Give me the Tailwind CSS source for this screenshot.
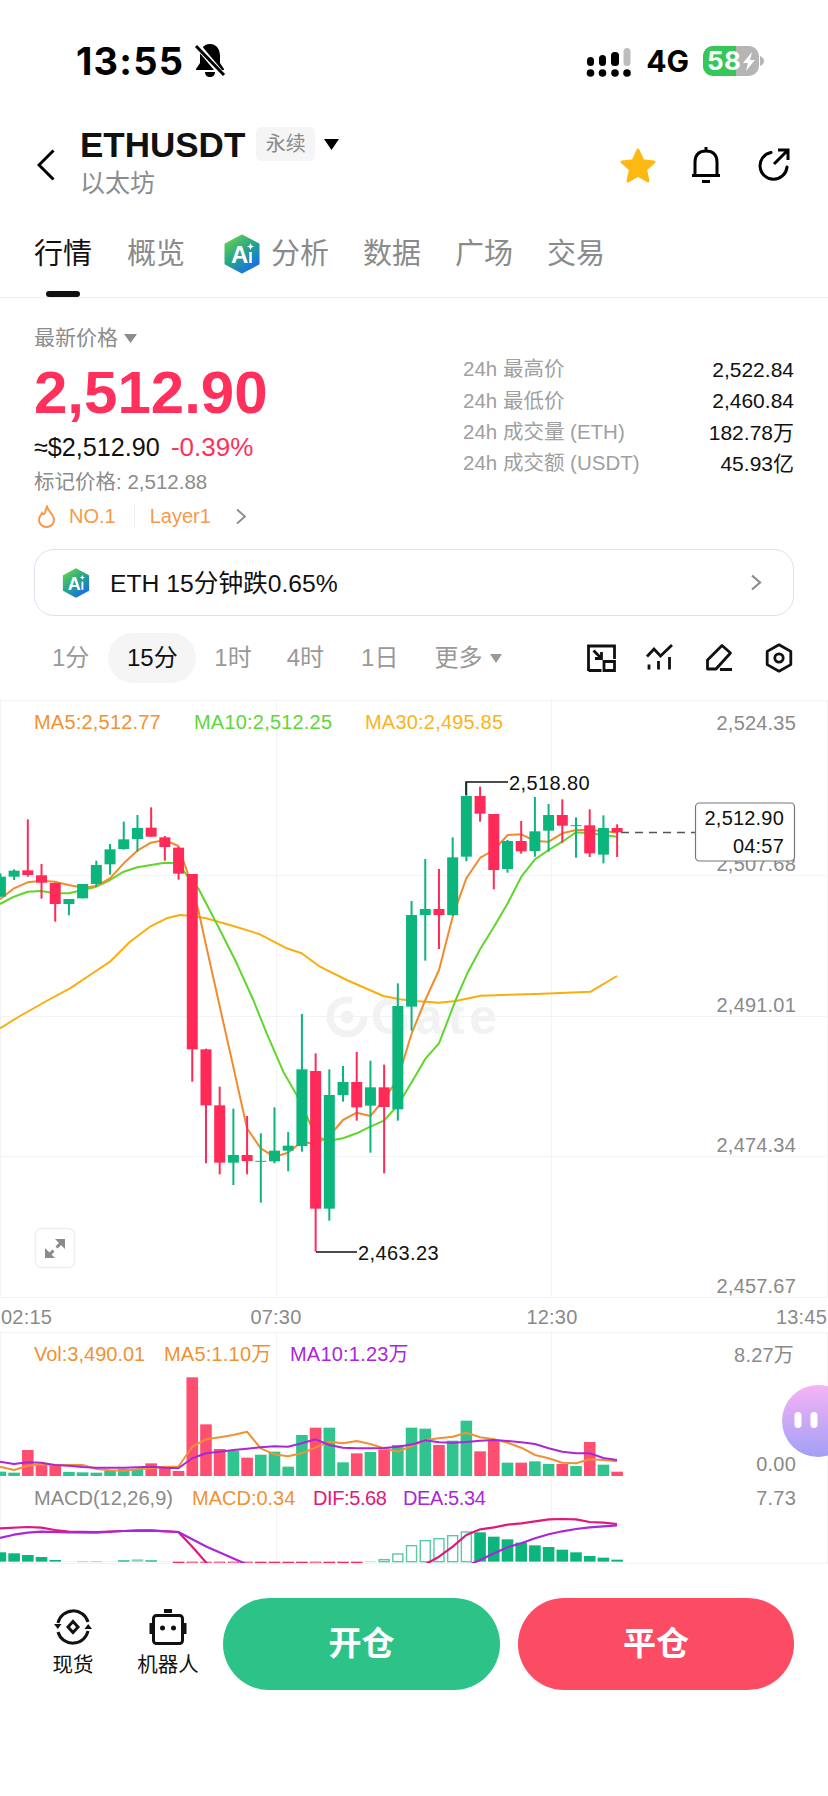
<!DOCTYPE html>
<html lang="zh">
<head>
<meta charset="utf-8">
<script src="https://cdn.jsdelivr.net/npm/@tailwindcss/browser@4"></script>
<title>ETHUSDT</title>
</head>
<body class="bg-white">
<div class="w-[828px] h-[1796px] overflow-hidden flex flex-col bg-white text-[#111] font-['Liberation_Sans','Noto_Sans_CJK_SC',sans-serif]">

  <!-- status bar -->
  <div class="h-[100px] pt-[41px] pl-[76px] pr-[63px] flex justify-between items-start shrink-0">
    <div class="flex items-center h-[40px] gap-[10px]">
      <span class="font-['Inter'] font-bold text-[38px] tracking-[1.200px] leading-none text-black">13:55</span>
      <svg width="32" height="34" viewBox="0 0 32 34" class="-mt-[2px]"><path d="M16 1c-7 0-10 6-10 12v7l-4 6v1h28v-1l-4-6v-7c0-6-3-12-10-12z" fill="#000"/><path d="M11 29h10c0 3-2 5-5 5s-5-2-5-5z" fill="#000"/><path d="M3 2 29 33" stroke="#fff" stroke-width="6"/><path d="M2 3 30 32" stroke="#000" stroke-width="3"/></svg>
    </div>
    <div class="flex items-center h-[40px]">
      <svg width="46" height="32" viewBox="0 0 46 32" class="mr-[15px] mt-[4px]">
        <g fill="#000"><rect x="2" y="10" width="7" height="9" rx="3.5"/><rect x="14" y="8" width="7" height="11" rx="3.5"/><rect x="26" y="5" width="8" height="14" rx="3.5"/><circle cx="5.500" cy="26" r="3.800"/><circle cx="17.500" cy="26" r="3.800"/><circle cx="30" cy="26" r="3.800"/><circle cx="42" cy="26" r="3.800"/></g>
        <rect x="38.500" y="1" width="7" height="18" rx="3.500" fill="#bdbdbd"/>
      </svg>
      <span class="font-['Inter'] font-bold text-[30px] leading-none text-black mr-[14px]">4G</span>
      <svg width="62" height="32" viewBox="0 0 62 32">
        <rect x="0" y="1" width="56" height="30" rx="10" fill="#b5b5b5"/>
        <path d="M10 1h23v30H10A10 10 0 0 1 0 21V11A10 10 0 0 1 10 1z" fill="#35c759"/>
        <path d="M57 11c3 1 4 3 4 5s-1 4-4 5z" fill="#b5b5b5"/>
        <text x="4" y="25" font-size="26" font-weight="700" letter-spacing=".5" fill="#fff" font-family="Inter">58</text>
        <path d="M49 7 40 18h5l-2 8 9-11h-5z" fill="#fff"/>
      </svg>
    </div>
  </div>

  <!-- header -->
  <div class="mt-[25px] h-[80px] pl-[37px] pr-[38px] flex items-center shrink-0">
    <svg width="18" height="32" viewBox="0 0 18 32" class="mr-[25px]"><path d="M16.500 1.500 2 16l14.500 14.500" fill="none" stroke="#000" stroke-width="3"/></svg>
    <div class="flex flex-col">
      <div class="flex items-center h-[38px]">
        <span class="font-bold text-[35px] leading-none text-[#111]">ETHUSDT</span>
        <span class="ml-[11px] w-[59px] h-[34px] rounded-[5px] bg-[#f5f5f5] text-[#8a8a8a] text-[20px] flex items-center justify-center">永续</span>
        <svg width="15" height="11" viewBox="0 0 15 11" class="ml-[9px]"><path d="M0 0h15L7.500 11z" fill="#000"/></svg>
      </div>
      <div class="h-[42px] flex items-center text-[25px] text-[#8c8c8c]">以太坊</div>
    </div>
    <div class="ml-auto flex items-center">
      <svg width="38" height="36" viewBox="0 0 38 36"><path d="M19 3l4.800 10.700 11.200 1.200-8.400 7.600 2.400 11.500L19 28.200 9 34l2.400-11.500L3 14.900l11.200-1.200z" fill="#fdb813" stroke="#fdb813" stroke-width="3" stroke-linejoin="round"/></svg>
      <svg width="32" height="38" viewBox="0 0 32 38" class="ml-[33px]"><path d="M5 28V16C5 9 9 5 16 5s11 4 11 11v12M2 29.500h28M16 1v4M12 35.500h8" fill="none" stroke="#000" stroke-width="3"/></svg>
      <svg width="33" height="34" viewBox="0 0 33 34" class="ml-[35px]"><path d="M14 4.500A13.500 13.500 0 1 0 30 19" fill="none" stroke="#000" stroke-width="3" stroke-linecap="round"/><path d="M17 16 30 3M21 2h10v10" fill="none" stroke="#000" stroke-width="3"/></svg>
    </div>
  </div>

  <!-- tabs -->
  <div class="h-[93px] border-b border-[#eeeeee] shrink-0">
    <div class="mt-[29px] h-[40px] pl-[34px] flex items-center text-[29px] text-[#8a8a8a] leading-none">
      <span class="text-[#111]">行情</span>
      <span class="ml-[35px]">概览</span>
      <svg width="36" height="40" viewBox="0 0 36 40" class="ml-[39px]">
        <defs><linearGradient id="ai1" x1="0" y1="0" x2="0.700" y2="1"><stop offset="0.150" stop-color="#5ac85a"/><stop offset="0.550" stop-color="#23a58c"/><stop offset="1" stop-color="#1a6fe8"/></linearGradient></defs>
        <path d="M18 2 34 10.500v19L18 38 2 29.500v-19z" fill="url(#ai1)" stroke="url(#ai1)" stroke-width="3" stroke-linejoin="round"/>
        <text x="7" y="29" font-size="24" font-weight="700" fill="#fff" font-family="Liberation Sans">A</text>
        <path d="M26.500 9l1 2.500 2.500 1-2.500 1-1 2.500-1-2.500-2.500-1 2.500-1zM25.300 18h2.500v11h-2.500z" fill="#fff"/>
      </svg>
      <span class="ml-[11px]">分析</span>
      <span class="ml-[34px]">数据</span>
      <span class="ml-[34px]">广场</span>
      <span class="ml-[34px]">交易</span>
    </div>
    <div class="mt-[17px] ml-[46px] w-[34px] h-[6px] rounded-[3px] bg-[#111]"></div>
  </div>

  <!-- price block -->
  <div class="h-[235px] px-[34px] flex justify-between shrink-0">
    <div class="flex flex-col pt-[23px]">
      <div class="h-[34px] flex items-center text-[21px] text-[#8c8c8c]">最新价格<svg width="13" height="9" viewBox="0 0 13 9" class="ml-[6px]"><path d="M0 0h13L6.500 9z" fill="#8c8c8c"/></svg></div>
      <div class="h-[75px] flex items-center font-bold text-[60px] leading-none text-[#ff305c]">2,512.90</div>
      <div class="h-[35px] flex items-center text-[25.200px]"><span>≈$2,512.90</span><span class="ml-[11px] text-[26px] text-[#ff305c]">-0.39%</span></div>
      <div class="h-[34px] flex items-center text-[20.500px] text-[#8c8c8c]">标记价格: 2,512.88</div>
      <div class="h-[34px] flex items-center text-[20px] text-[#f7994a]">
        <svg width="19" height="23" viewBox="0 0 19 23" class="ml-[3px]"><path d="M10 1.500c1 5 7 8 7 13.500a7.500 7 0 0 1-15 0c0-3.500 2-5 3-7 1 1.500 2 1.500 2.800 0 1-2 1-4.500 2.200-6.500z" fill="none" stroke="#f7994a" stroke-width="2"/></svg>
        <span class="ml-[13px]">NO.1</span>
        <span class="ml-[18px] w-px h-[26px] bg-[#f0f0f0]"></span>
        <span class="ml-[15px]">Layer1</span>
        <svg width="12" height="17" viewBox="0 0 12 17" class="ml-[24px]"><path d="M2 1.500 10 8.500l-8 7" fill="none" stroke="#8c8c8c" stroke-width="1.800"/></svg>
      </div>
    </div>
    <div class="w-[331px] pt-[56px] flex flex-col">
      <div class="h-[31.330px] flex items-center justify-between"><span class="text-[20.500px] text-[#a0a0a0]">24h 最高价</span><span class="text-[21px]">2,522.84</span></div>
      <div class="h-[31.330px] flex items-center justify-between"><span class="text-[20.500px] text-[#a0a0a0]">24h 最低价</span><span class="text-[21px]">2,460.84</span></div>
      <div class="h-[31.330px] flex items-center justify-between"><span class="text-[20.500px] text-[#a0a0a0]">24h 成交量 (ETH)</span><span class="text-[21px]">182.78万</span></div>
      <div class="h-[31.330px] flex items-center justify-between"><span class="text-[20.500px] text-[#a0a0a0]">24h 成交额 (USDT)</span><span class="text-[21px]">45.93亿</span></div>
    </div>
  </div>

  <!-- AI card -->
  <div class="mt-[16px] mx-[34px] h-[67px] border border-[#e3dcf5] rounded-[20px] pl-[27px] pr-[31px] flex items-center shrink-0">
    <svg width="28" height="30" viewBox="0 0 36 40">
      <path d="M18 2 34 10.500v19L18 38 2 29.500v-19z" fill="url(#ai1)" stroke="url(#ai1)" stroke-width="3" stroke-linejoin="round"/>
      <text x="7" y="29" font-size="24" font-weight="700" fill="#fff" font-family="Liberation Sans">A</text>
      <path d="M26.500 9l1 2.500 2.500 1-2.500 1-1 2.500-1-2.500-2.500-1 2.500-1zM25.300 18h2.500v11h-2.500z" fill="#fff"/>
    </svg>
    <span class="ml-[20px] mt-[2px] text-[24.700px] text-[#111]">ETH 15分钟跌0.65%</span>
    <svg width="12" height="17" viewBox="0 0 12 17" class="ml-auto"><path d="M2 1.500 10 8.500l-8 7" fill="none" stroke="#8c8c8c" stroke-width="2.200"/></svg>
  </div>

  <!-- timeframes -->
  <div class="mt-[17px] h-[50px] flex items-center text-[24px] text-[#999999] pr-[34px] shrink-0">
    <span class="ml-[52px]">1分</span>
    <span class="ml-[19px] w-[88px] h-[50px] rounded-[25px] bg-[#f5f5f5] text-[#111] flex items-center justify-center">15分</span>
    <span class="ml-[18px]">1时</span>
    <span class="ml-[35px]">4时</span>
    <span class="ml-[37px]">1日</span>
    <span class="ml-[36px]">更多</span>
    <svg width="12" height="9" viewBox="0 0 12 9" class="ml-[8px]"><path d="M0 0h12L6 9z" fill="#999999"/></svg>
    <div class="ml-auto flex items-center gap-[29.500px]">
      <svg width="30" height="30" viewBox="0 0 30 30" fill="none" stroke="#111" stroke-width="2.800"><path d="M2.500 28V3h26v13M2.500 27.500h13M18 18.500h10.500v9H18zM7.500 7.500l8 8M15.500 9v6.500H9"/></svg>
      <svg width="30" height="30" viewBox="0 0 30 30" fill="none" stroke="#111" stroke-width="2.800"><path d="M2 13.500l7-7.500 6.500 7L27 2M4 21.500v5M13.500 18v8.500M24.500 14v12.500"/></svg>
      <svg width="30" height="30" viewBox="0 0 30 30" fill="none" stroke="#111" stroke-width="2.800" stroke-linejoin="round"><path d="M2.500 17 17 2.500l8.500 7.500-14.500 16H2.500zM15 26.500h12"/></svg>
      <svg width="30" height="30" viewBox="0 0 30 30" fill="none" stroke="#111" stroke-width="2.800" stroke-linejoin="round"><path d="M15 1.800 26.800 8.400v13.200L15 28.200 3.200 21.600V8.400z"/><circle cx="15" cy="15" r="4.200"/></svg>
    </div>
  </div>

  <!-- chart -->
  <div class="mt-[17px] h-[864px] shrink-0">
    <svg width="828" height="864" viewBox="0 700 828 864" class="block font-['Liberation_Sans','Noto_Sans_CJK_SC',sans-serif]">
      <g stroke="#f3f3f3" stroke-width="1" fill="none">
        <path d="M0 700.500H828M0 875.500H828M0 1016.500H828M0 1156.500H828M0 1297.500H828M0 1332.500H828M0 1563.500H828"/>
        <path d="M.5 700V1297M276.500 700V1297M551.500 700V1297M827.500 700V1297M.5 1332V1564M276.500 1332V1564M551.500 1332V1564M827.500 1332V1564"/>
      </g>
      <!-- watermark -->
      <g>
        <path d="M364 1017a17 17 0 1 1-12-16.300" fill="none" stroke="#f1f2f4" stroke-width="7"/>
        <circle cx="347" cy="1017" r="6.500" fill="#f1f2f4"/>
        <text x="371" y="1034" font-size="50" font-weight="700" fill="#f1f2f4" letter-spacing="5" font-family="Liberation Sans">Gate</text>
      </g>
      <g id="lines" fill="none" stroke-width="2" stroke-linejoin="round"></g>
      <g id="candles"></g>
      <g id="vol"></g>
      <g id="macd"></g>

      <g font-size="20" letter-spacing=".2">
        <text x="34" y="729" fill="#f09233">MA5:2,512.77</text>
        <text x="194" y="729" fill="#5fd63a">MA10:2,512.25</text>
        <text x="365" y="729" fill="#f9b41b">MA30:2,495.85</text>
        <g fill="#8a8a8a" text-anchor="end">
          <text x="796" y="730">2,524.35</text>
          <text x="796" y="871">2,507.68</text>
          <text x="796" y="1012">2,491.01</text>
          <text x="796" y="1152">2,474.34</text>
          <text x="796" y="1293">2,457.67</text>
        </g>
        <g fill="#8a8a8a">
          <text x="1" y="1324">02:15</text>
          <text x="276" y="1324" text-anchor="middle">07:30</text>
          <text x="552" y="1324" text-anchor="middle">12:30</text>
          <text x="827" y="1324" text-anchor="end">13:45</text>
        </g>
        <path d="M466 795V782H508" fill="none" stroke="#111" stroke-width="1.500"/>
        <text x="509" y="790" fill="#111" letter-spacing=".4">2,518.80</text>
        <path d="M316 1252H357" fill="none" stroke="#111" stroke-width="1.500"/>
        <text x="358" y="1260" fill="#111" letter-spacing=".4">2,463.23</text>
        <path d="M621 832.500H695" stroke="#555" stroke-width="1.500" stroke-dasharray="8 6" fill="none"/>
        <rect x="695.500" y="803" width="99" height="58" rx="4" fill="#fff" stroke="#777" stroke-width="1.200"/>
        <text x="784" y="825" fill="#111" text-anchor="end">2,512.90</text>
        <text x="784" y="853" fill="#111" text-anchor="end">04:57</text>

        <text x="34" y="1361" fill="#f09233" letter-spacing="0">Vol:3,490.01</text>
        <text x="164" y="1361" fill="#f09233">MA5:1.10万</text>
        <text x="290" y="1361" fill="#a927d9">MA10:1.23万</text>
        <text x="794" y="1362" fill="#8a8a8a" text-anchor="end">8.27万</text>
        <text x="796" y="1471" fill="#8a8a8a" text-anchor="end">0.00</text>
        <text x="34" y="1505" fill="#8a8a8a" letter-spacing="0">MACD(12,26,9)</text>
        <text x="192" y="1505" fill="#f09233" letter-spacing="0">MACD:0.34</text>
        <text x="313" y="1505" fill="#e0187a" letter-spacing="-.4">DIF:5.68</text>
        <text x="403" y="1505" fill="#a927d9" letter-spacing="-.4">DEA:5.34</text>
        <text x="796" y="1505" fill="#8a8a8a" text-anchor="end">7.73</text>
      </g>

      <!-- expand button -->
      <rect x="35.500" y="1228.500" width="39" height="39" rx="6" fill="#fff" stroke="#eeeeee" stroke-width="1.500"/>
      <path d="M55 1239h10v10zM45 1248v10h10z" fill="#8a8a8a"/>
      <path d="M60.500 1243.500 56.500 1247.500M53.500 1250.500 49.500 1254.500" stroke="#8a8a8a" stroke-width="3" fill="none"/>

      <!-- floating assistant -->
      <defs><linearGradient id="bot" x1="0" y1="0" x2="0" y2="1"><stop offset="0" stop-color="#f5b4f5"/><stop offset="1" stop-color="#a29ff6"/></linearGradient></defs>
      <circle cx="818" cy="1421" r="36" fill="url(#bot)"/>
      <rect x="794.500" y="1412" width="7" height="16" rx="3.500" fill="#fff"/>
      <rect x="810.500" y="1412" width="7" height="16" rx="3.500" fill="#fff"/>
    </svg>
  </div>

  <!-- bottom bar -->
  <div class="pt-[34px] pl-[53px] flex items-start shrink-0">
    <div class="w-[40px] pt-[10px] flex flex-col items-center">
      <svg width="38" height="38" viewBox="0 0 38 38" fill="none" stroke="#111" stroke-width="3">
        <path d="M4 15A15.500 15.500 0 0 1 34 14M34 23A15.500 15.500 0 0 1 4 24"/>
        <path d="M0 16h7.500l-3.700 5zM38 21h-7.500l3.700-5z" fill="#111" stroke="none"/>
        <path d="M19 13.500l5 5.500-5 5.500-5-5.500z"/>
      </svg>
      <span class="mt-[5px] text-[20.500px] leading-[28px] whitespace-nowrap text-[#111]">现货</span>
    </div>
    <div class="ml-[43px] w-[64px] pt-[10px] flex flex-col items-center">
      <svg width="38" height="38" viewBox="0 0 38 38">
        <rect x="15" y="1" width="8" height="4" fill="#111"/>
        <rect x="4.500" y="7.500" width="29" height="28" rx="3" fill="none" stroke="#111" stroke-width="3"/>
        <rect x="0.500" y="15" width="3" height="11" fill="#111"/>
        <rect x="34.500" y="15" width="3" height="11" fill="#111"/>
        <circle cx="13.500" cy="20" r="2.500" fill="#111"/><circle cx="24.500" cy="20" r="2.500" fill="#111"/>
      </svg>
      <span class="mt-[5px] text-[20.500px] leading-[28px] whitespace-nowrap text-[#111]">机器人</span>
    </div>
    <div class="ml-[23px] w-[277px] h-[92px] rounded-full bg-[#2dc388] text-white font-bold text-[33px] flex items-center justify-center">开仓</div>
    <div class="ml-[18px] w-[276px] h-[92px] rounded-full bg-[#fb4c64] text-white font-bold text-[33px] flex items-center justify-center">平仓</div>
  </div>
</div>

<script>
(function () {
  var NS = 'http://www.w3.org/2000/svg';
  function el(parent, name, attrs) {
    var e = document.createElementNS(NS, name);
    for (var k in attrs) e.setAttribute(k, attrs[k]);
    parent.appendChild(e);
    return e;
  }
  var X = function (i) { return 0.4 + 13.705 * i; };
  var G = '#0cb57c', R = '#ff2a58';
  // [colour, wickTop, bodyTop, bodyBottom, wickBottom] real y
  var a = function (v) { return 700 + v / 3; }, b = function (v) { return 1000 + v / 3; };
  var c = [
    [G,a(520),a(530),a(590),a(590)],[G,a(508),a(512),a(530),a(540)],[R,a(358),a(511),a(525),a(530)],[R,a(492),a(526),a(548),a(596)],
    [R,a(548),a(549),a(612),a(665)],[G,a(597),a(597),a(612),a(646)],[G,a(552),a(552),a(595),a(595)],[G,a(482),a(495),a(552),a(560)],
    [G,a(432),a(448),a(493),a(524)],[G,a(365),a(418),a(447),a(449)],[G,a(345),a(384),a(417),a(455)],[R,a(322),a(383),a(410),a(410)],
    [R,a(408),a(412),a(441),a(482)],[R,a(440),a(443),a(521),a(539)],[R,a(522),a(522),b(148),b(245)],
    [R,b(146),b(148),b(316),b(490)],[R,b(260),b(316),b(488),b(523)],[G,b(326),b(465),b(488),b(555)],[R,b(348),b(465),b(483),b(523)],
    [G,b(400),b(484),b(484),b(608)],[G,b(322),b(452),b(484),b(490)],[G,b(396),b(437),b(452),b(514)],[G,b(42),b(208),b(438),b(455)],
    [R,b(160),b(213),b(626),b(755)],[G,b(208),b(285),b(626),b(662)],[G,b(198),b(246),b(285),b(305)],[R,b(156),b(246),b(322),b(362)],
    [G,b(182),b(262),b(317),b(458)],[R,b(194),b(262),b(321),b(520)],[G,a(850),b(18),b(328),b(362)],[G,a(603),a(645),b(20),b(92)],
    [G,a(477),a(627),a(645),a(782)],[R,a(507),a(627),a(645),a(747)],[G,a(412),a(472),a(645),a(648)],[G,a(248),a(288),a(470),a(484)],
    [R,a(260),a(288),a(341),a(365)],[R,a(342),a(342),a(510),a(568)],[G,a(420),a(423),a(507),a(518)],[R,a(363),a(423),a(454),a(461)],
    [G,a(291),a(394),a(453),a(470)],[G,a(312),a(345),a(392),a(455)],[R,a(298),a(345),a(377),a(428)],[G,a(352),a(377),a(377),a(473)],
    [R,a(328),a(376),a(460),a(471)],[G,a(346),a(384),a(464),a(490)],[R,a(373),a(384),a(397),a(471)]
  ];
  var lg = document.getElementById('lines');
  function poly(parent, pts, color, w) {
    el(parent, 'polyline', { points: pts.map(function (p) { return p[0].toFixed(1) + ',' + p[1].toFixed(1); }).join(' '), stroke: color, fill: 'none', 'stroke-width': w || 2, 'stroke-linejoin': 'round' });
  }
  // helpers to convert zoom coordinates into page coordinates
  function zz(list, baseX, baseY) { var o = []; for (var i = 0; i < list.length; i += 2) o.push([baseX + list[i] / 3, baseY + list[i + 1] / 3]); return o; }
  var ma5 = zz([0,598,42,565,83,547,124,542,165,545,206,555,248,563,289,558,330,535,371,490,412,452,453,428,494,420,535,438,560,510,595,630,618,735,655,900],0,700)
    .concat(zz([700,200,741,385,782,445,823,470,864,458,905,425,947,432,988,408,1029,360,1070,338,1111,348,1152,300,1194,235,1235,100],0,1000))
    .concat(zz([34,900,75,810,116,650,157,535,199,473,240,450,281,405,322,403,363,423,404,425,445,400,486,390,527,390,568,393,609,398],414,700));
  var ma10 = zz([0,612,42,590,83,575,124,573,165,580,206,580,248,570,289,560,330,540,371,515,412,502,453,495,494,488,535,490,560,525,595,565,655,680,710,790,760,900],0,700)
    .concat(zz([800,100,850,215,890,285,930,370,947,410,988,422,1029,415,1070,400,1111,380,1152,362,1194,315,1242,235],0,1000))
    .concat(zz([35,175,75,130,125,0],414,1000))
    .concat(zz([160,820,200,745,240,680,281,610,322,530,363,478,404,450,445,425,486,397,527,400,568,405,609,410],414,700));
  var ma30 = zz([0,85,60,48,145,0],0,1000)
    .concat(zz([210,865,270,825,330,785,390,725,450,680,500,655,540,645,577,648,618,655,700,678,780,703,860,745,905,760,960,800,1040,840,1150,888,1200,898,1242,903],0,700))
    .concat(zz([35,5,75,8,125,3],414,1000))
    .concat(zz([200,887,365,882,530,875,609,828],414,700));
  poly(lg, ma30, '#f9ae0e');
  poly(lg, ma10, '#5fd62c');
  poly(lg, ma5, '#f08c2e');
  var cg = document.getElementById('candles');
  c.forEach(function (d, i) {
    var x = X(i);
    el(cg, 'rect', { x: x - 1, y: d[1], width: 2, height: d[4] - d[1], fill: d[0] });
    var h = d[3] - d[2];
    el(cg, 'rect', { x: x - 5.5, y: h < 1 ? d[2] - 0.5 : d[2], width: 11, height: h < 1 ? 1 : h, fill: d[0] });
  });

  // volume
  var vg = document.getElementById('vol');
  var VG = '#32c48f', VR = '#ff4f70', base = 1320 + 468 / 3;
  var vols = [[VG,455],[VG,458],[VR,390],[VR,433],[VR,436],[VG,456],[VG,457],[VG,458],[VG,452],[VG,447],[VG,447],[VR,430],[VR,440],[VR,453],[VR,172],[VR,313],[VR,387],[VG,392],[VR,413],[VG,404],[VG,395],[VG,440],[VG,345],[VR,323],[VG,323],[VG,427],[VR,400],[VG,396],[VR,388],[VG,375],[VG,323],[VG,326],[VR,375],[VG,362],[VG,302],[VR,394],[VR,362],[VG,428],[VR,428],[VG,424],[VG,432],[VR,432],[VG,438],[VR,366],[VG,434],[VR,455]];
  vols.forEach(function (v, i) {
    var t = 1320 + v[1] / 3;
    el(vg, 'rect', { x: X(i) - 5.8, y: t, width: 11.6, height: base - t, fill: v[0] });
  });
  poly(vg, zz([0,440,42,450,83,437,124,433,165,436,206,435,248,435,289,447,330,451,371,452,412,448,453,445,494,440,535,440,577,380,618,358,659,352,700,345,741,335,782,385,823,403,864,409,905,400,947,382,988,365,1029,370,1070,363,1111,372,1152,385,1194,395,1242,375],0,1320)
    .concat(zz([34,360,75,355,116,350,157,338,199,352,240,358,281,368,322,383,363,405,404,415,445,428,486,430,527,418,568,420,609,424],414,1320)), '#f09233');
  poly(vg, zz([0,425,42,432,83,427,124,428,165,435,206,437,248,441,289,443,330,443,371,443,412,442,453,440,494,443,535,445,577,415,618,400,659,395,700,390,741,386,782,382,823,379,864,380,905,370,947,358,988,375,1029,383,1070,385,1111,385,1152,384,1194,380,1242,372],0,1320)
    .concat(zz([34,361,75,367,116,368,157,366,199,362,240,360,281,363,322,367,363,372,404,385,445,395,486,400,527,400,568,414,609,420],414,1320)), '#a927d9');

  // macd histogram
  var mg = document.getElementById('macd');
  var clip = el(mg, 'clipPath', { id: 'mc' });
  el(clip, 'rect', { x: 0, y: 1500, width: 828, height: 63 });
  var inner = el(mg, 'g', { 'clip-path': 'url(#mc)' });
  var zero = 1320 + 725 / 3, H = '#0cb57c', O = '#5cc9a2';
  var up = [697,700,705,711,720,724,null,null,724,721,718,721,724];
  up.forEach(function (z, i) {
    if (z === null) return;
    var t = 1320 + z / 3;
    el(inner, 'rect', { x: X(i) - 5.8, y: t, width: 11.6, height: zero - t, fill: i === 10 ? '#7fd6b5' : H, opacity: z >= 724 ? 0.3 : 1 });
  });
  [6, 7].forEach(function (i) { el(inner, 'rect', { x: X(i) - 5.8, y: zero - .5, width: 11.6, height: 1, fill: '#f4b4c4' }); });
  for (var i = 13; i <= 26; i++) {
    var hollow = i === 14 || i === 15 || i === 16 || i === 17 || i === 18 || i === 23;
    if (hollow) el(inner, 'rect', { x: X(i) - 5, y: zero + .5, width: 10, height: 6, fill: '#fff', stroke: R, 'stroke-width': 1 });
    else el(inner, 'rect', { x: X(i) - 5.8, y: zero, width: 11.6, height: 3, fill: R });
  }
  el(inner, 'rect', { x: X(27) - 5.8, y: zero - .5, width: 11.6, height: 1, fill: '#bfe8d8' });
  var oz = { 28: 719, 29: 702, 30: 677, 31: 662, 32: 656, 33: 647, 34: 636 };
  for (var k in oz) { var t = 1320 + oz[k] / 3; el(inner, 'rect', { x: X(+k) - 5, y: t, width: 10, height: zero - t, fill: '#fff', stroke: O, 'stroke-width': 1.4 }); }
  var fz = { 35: 637, 36: 650, 37: 658, 38: 668, 39: 676, 40: 681, 41: 689, 42: 697, 43: 708, 44: 713, 45: 719 };
  for (var k2 in fz) { var t2 = 1320 + fz[k2] / 3; el(inner, 'rect', { x: X(+k2) - 5.8, y: t2, width: 11.6, height: zero - t2, fill: H }); }
  poly(inner, zz([0,625,83,621,124,623,165,630,206,635,289,636,371,633,412,631,453,631,535,636,577,680,625,735],0,1320).concat([[422,1565]]).concat(zz([40,730,75,710,116,680,157,645,199,628,240,622,281,614,322,610,363,604,404,598,445,597,486,598,527,606,568,608,609,612],414,1320)), '#e0187a', 2.2);
  poly(inner, zz([0,654,42,644,83,638,124,635,206,637,289,638,371,633,453,632,535,636,620,680,745,735],0,1320).concat([[470,1565]]).concat(zz([175,730,199,720,240,700,281,682,322,670,363,655,404,643,445,634,486,627,527,622,568,619,609,616],414,1320)), '#a927d9', 2.2);
})();
</script>
</body>
</html>
